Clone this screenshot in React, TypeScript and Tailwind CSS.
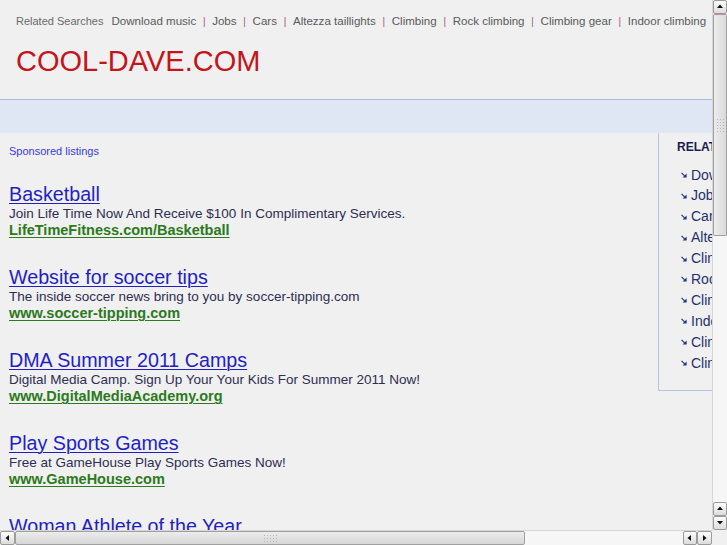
import React from "react";

const topLinks = [
  "Download music",
  "Jobs",
  "Cars",
  "Altezza taillights",
  "Climbing",
  "Rock climbing",
  "Climbing gear",
  "Indoor climbing",
  "Climbing shoes",
  "Climbing walls",
];

const ads = [
  {
    title: "Basketball",
    desc: "Join Life Time Now And Receive $100 In Complimentary Services.",
    url: "LifeTimeFitness.com/Basketball",
  },
  {
    title: "Website for soccer tips",
    desc: "The inside soccer news bring to you by soccer-tipping.com",
    url: "www.soccer-tipping.com",
  },
  {
    title: "DMA Summer 2011 Camps",
    desc: "Digital Media Camp. Sign Up Your Your Kids For Summer 2011 Now!",
    url: "www.DigitalMediaAcademy.org",
  },
  {
    title: "Play Sports Games",
    desc: "Free at GameHouse Play Sports Games Now!",
    url: "www.GameHouse.com",
  },
  {
    title: "Woman Athlete of the Year",
    desc: "Vote for the Woman Athlete of the Year Award.",
    url: "www.example.com",
  },
];

function Bullet() {
  return (
    <svg width="6" height="6" viewBox="0 0 6 6" className="shrink-0">
      <path d="M0.5 0.8 L3.6 3.9" stroke="#23307a" strokeWidth="1.2" />
      <path d="M5.6 1.6 L5.6 5.6 L1.6 5.6 Z" fill="#23307a" />
    </svg>
  );
}

function Arrow({ dir }: { dir: "up" | "down" | "left" | "right" }) {
  const d =
    dir === "up"
      ? "M1 5 L4 1.5 L7 5 Z"
      : dir === "down"
      ? "M1 2 L4 5.5 L7 2 Z"
      : dir === "left"
      ? "M5 1 L1.5 4 L5 7 Z"
      : "M2 1 L5.5 4 L2 7 Z";
  return (
    <svg width="8" height="8" viewBox="0 0 8 8">
      <path d={d} fill="#111" />
    </svg>
  );
}

function Btn({ dir, className }: { dir: "up" | "down" | "left" | "right"; className: string }) {
  return (
    <div
      className={`flex items-center justify-center rounded-[2px] border border-[#9a9a9a] bg-gradient-to-b from-[#fdfdfd] to-[#dcdcdc] ${className}`}
    >
      <Arrow dir={dir} />
    </div>
  );
}

function Grip({ vertical }: { vertical: boolean }) {
  const dots = [];
  for (let i = 0; i < 15; i++) dots.push(<div key={i} className="h-[1px] w-[1px] bg-[#b8b8b8]" />);
  return (
    <div className={vertical ? "grid grid-cols-3 gap-[2px]" : "grid grid-cols-5 gap-[2px]"}>
      {dots}
    </div>
  );
}

export default function App() {
  return (
    <div
      className="flex h-[545px] w-[727px] flex-col overflow-hidden bg-[#f0f0f0]"
      style={{ fontFamily: '"Liberation Sans", Arial, sans-serif' }}
    >
      <div className="flex h-[530px]">
        {/* viewport */}
        <div className="h-[530px] w-[712px] overflow-hidden">
          <div className="w-[900px]">
            {/* header */}
            <div className="h-[99px] bg-[#f0f0f0]">
              <div className="flex items-baseline whitespace-nowrap pl-[16px] pt-[13px] leading-[16px]">
                <span className="text-[11px] text-[#6a6a6a]">Related Searches</span>
                <span className="ml-[8px] flex items-baseline text-[11.55px] text-[#5a5a5a]">
                  {topLinks.map((l, i) => (
                    <React.Fragment key={l}>
                      {i > 0 && <span className="px-[6.5px] text-[#b06a90]">|</span>}
                      <span>{l}</span>
                    </React.Fragment>
                  ))}
                </span>
              </div>
              <div className="mt-[18px] pl-[16px] text-[29px] leading-[29px] text-[#c4151c]">
                COOL-DAVE.COM
              </div>
            </div>
            {/* blue band */}
            <div className="h-[34px] border-t border-[#a9bbe3] bg-[#dfe6f4]" />
            {/* main */}
            <div className="flex">
              <div className="w-[658px] shrink-0 pl-[9px] pt-[12px]">
                <div className="text-[11px] leading-[13px] text-[#3a3ae0]">Sponsored listings</div>
                <div className="mt-[26px] flex flex-col gap-[28px]">
                  {ads.map((a) => (
                    <div key={a.title} className="whitespace-nowrap">
                      <div className="text-[19.7px] leading-[21px] text-[#1f1fc4] underline decoration-1 underline-offset-[2px]">
                        {a.title}
                      </div>
                      <div className="text-[13.5px] leading-[17px] text-[#2e2e52]">{a.desc}</div>
                      <div className="text-[14.5px] font-bold leading-[17px] text-[#2b7a1b] underline decoration-1 underline-offset-[2px]">
                        {a.url}
                      </div>
                    </div>
                  ))}
                </div>
              </div>
              <div className="h-[258px] w-[200px] shrink-0 border-b border-l border-[#b5c3e6] pl-[18px] pt-[6.5px]">
                <div className="whitespace-nowrap text-[12px] font-bold leading-[14px] text-[#1c1c50]">
                  RELATED SEARCHES
                </div>
                <div className="mt-[11px] flex flex-col">
                  {topLinks.map((l) => (
                    <div
                      key={l}
                      className="flex items-center gap-[4px] whitespace-nowrap pl-[4px] text-[14px] leading-[20.9px] text-[#25306e]"
                    >
                      <Bullet />
                      <span>{l}</span>
                    </div>
                  ))}
                </div>
              </div>
            </div>
          </div>
        </div>
        {/* vertical scrollbar */}
        <div className="flex h-[530px] w-[15px] flex-col border-l border-[#d6d6d6] bg-[#f6f6f6]">
          <Btn dir="up" className="h-[14px] w-[14px]" />
          <div className="flex h-[222px] w-[14px] items-center justify-center rounded-[2px] border border-[#a0a0a0] border-t-[#c08aa8] bg-gradient-to-r from-[#ececec] to-[#dadada]">
            <Grip vertical />
          </div>
          <div className="flex-1" />
          <Btn dir="up" className="h-[14px] w-[14px]" />
          <Btn dir="down" className="h-[14px] w-[14px]" />
        </div>
      </div>
      {/* horizontal scrollbar */}
      <div className="flex h-[15px]">
        <div className="flex h-[15px] w-[712px] border-t border-[#d6d6d6] bg-[#f6f6f6]">
          <Btn dir="left" className="h-[14px] w-[15px]" />
          <div className="flex h-[14px] w-[510px] items-center justify-center rounded-[2px] border border-[#a0a0a0] bg-gradient-to-b from-[#ececec] to-[#d6d6d6]">
            <Grip vertical={false} />
          </div>
          <div className="flex-1" />
          <Btn dir="left" className="h-[14px] w-[14px]" />
          <Btn dir="right" className="h-[14px] w-[15px]" />
        </div>
        <div className="h-[15px] w-[15px] bg-[#f0f0f0]" />
      </div>
    </div>
  );
}
